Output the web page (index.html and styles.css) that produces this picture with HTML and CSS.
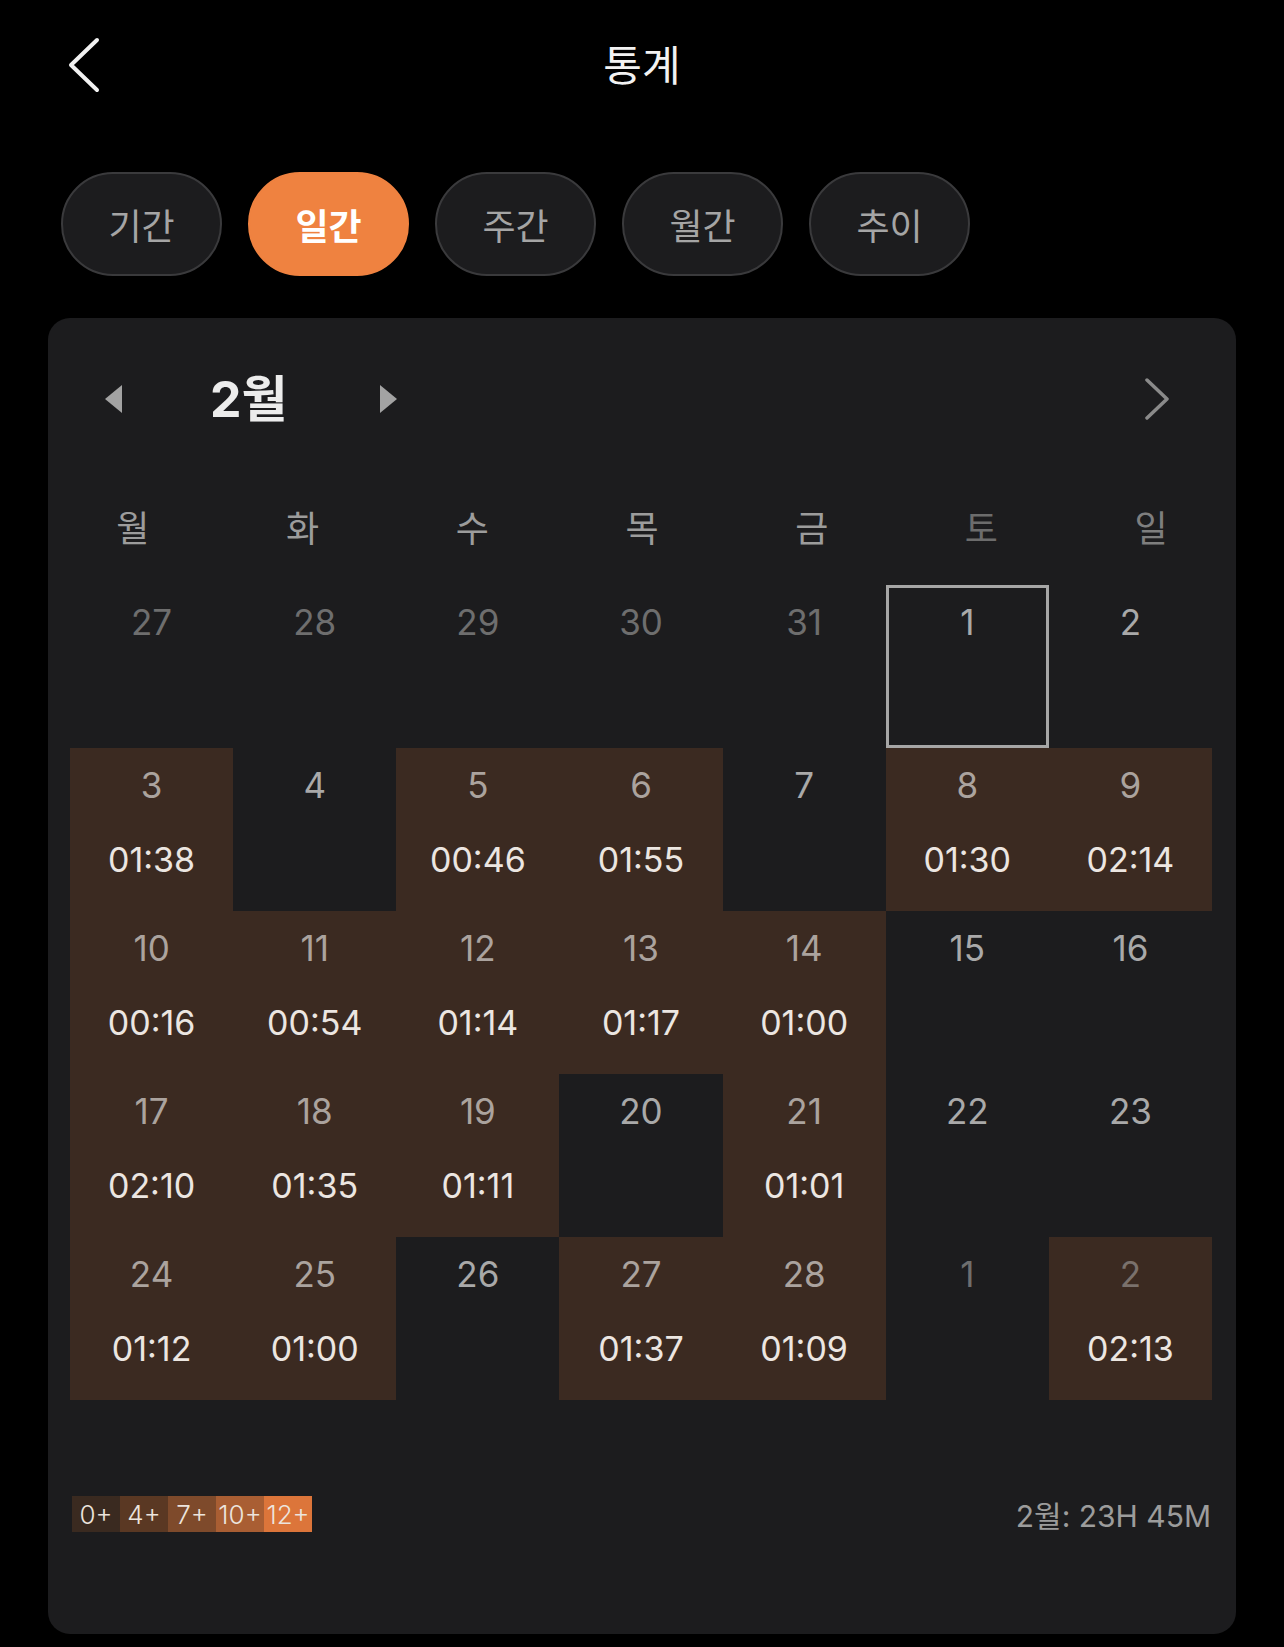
FILE: index.html
```html
<!DOCTYPE html>
<html lang="ko">
<head>
<meta charset="utf-8">
<title>통계</title>
<link rel="stylesheet" href="styles.css">
</head>
<body>
<header class="topbar">
  <div class="back">
    <svg width="34" height="56" viewBox="0 0 34 56"><path d="M29 3 L3 28 L29 53" fill="none" stroke="#f2f2f2" stroke-width="4" stroke-linecap="round" stroke-linejoin="round"/></svg>
  </div>
  <h1 class="title">통계</h1>
  <div></div>
</header>

<nav class="tabs">
  <div class="tab">기간</div>
  <div class="tab active">일간</div>
  <div class="tab">주간</div>
  <div class="tab">월간</div>
  <div class="tab">추이</div>
</nav>

<section class="card">
  <div class="monthbar">
    <div class="monthsel">
      <svg class="tri" width="17" height="28" viewBox="0 0 17 28"><path d="M17 0 L0 14 L17 28 Z" fill="#a3a3a3"/></svg>
      <span class="month">2월</span>
      <svg class="tri" width="17" height="28" viewBox="0 0 17 28"><path d="M0 0 L17 14 L0 28 Z" fill="#a3a3a3"/></svg>
    </div>
    <svg class="next" width="26" height="42" viewBox="0 0 26 42"><path d="M3 2 L23 21 L3 40" fill="none" stroke="#8a8a8a" stroke-width="3.5" stroke-linecap="round" stroke-linejoin="round"/></svg>
  </div>

  <div class="weekdays">
    <span>월</span><span>화</span><span>수</span><span>목</span><span>금</span><span class="sat">토</span><span class="sun">일</span>
  </div>

  <div class="grid">
    <div class="cell other"><span class="d">27</span></div>
    <div class="cell other"><span class="d">28</span></div>
    <div class="cell other"><span class="d">29</span></div>
    <div class="cell other"><span class="d">30</span></div>
    <div class="cell other"><span class="d">31</span></div>
    <div class="cell selected"><span class="d">1</span></div>
    <div class="cell"><span class="d">2</span></div>

    <div class="cell on"><span class="d">3</span><span class="t">01:38</span></div>
    <div class="cell"><span class="d">4</span></div>
    <div class="cell on"><span class="d">5</span><span class="t">00:46</span></div>
    <div class="cell on"><span class="d">6</span><span class="t">01:55</span></div>
    <div class="cell"><span class="d">7</span></div>
    <div class="cell on"><span class="d">8</span><span class="t">01:30</span></div>
    <div class="cell on"><span class="d">9</span><span class="t">02:14</span></div>

    <div class="cell on"><span class="d">10</span><span class="t">00:16</span></div>
    <div class="cell on"><span class="d">11</span><span class="t">00:54</span></div>
    <div class="cell on"><span class="d">12</span><span class="t">01:14</span></div>
    <div class="cell on"><span class="d">13</span><span class="t">01:17</span></div>
    <div class="cell on"><span class="d">14</span><span class="t">01:00</span></div>
    <div class="cell"><span class="d">15</span></div>
    <div class="cell"><span class="d">16</span></div>

    <div class="cell on"><span class="d">17</span><span class="t">02:10</span></div>
    <div class="cell on"><span class="d">18</span><span class="t">01:35</span></div>
    <div class="cell on"><span class="d">19</span><span class="t">01:11</span></div>
    <div class="cell"><span class="d">20</span></div>
    <div class="cell on"><span class="d">21</span><span class="t">01:01</span></div>
    <div class="cell"><span class="d">22</span></div>
    <div class="cell"><span class="d">23</span></div>

    <div class="cell on"><span class="d">24</span><span class="t">01:12</span></div>
    <div class="cell on"><span class="d">25</span><span class="t">01:00</span></div>
    <div class="cell"><span class="d">26</span></div>
    <div class="cell on"><span class="d">27</span><span class="t">01:37</span></div>
    <div class="cell on"><span class="d">28</span><span class="t">01:09</span></div>
    <div class="cell other"><span class="d">1</span></div>
    <div class="cell on other"><span class="d">2</span><span class="t">02:13</span></div>
  </div>

  <div class="footer">
    <div class="legend">
      <span class="lv l0">0+</span><span class="lv l1">4+</span><span class="lv l2">7+</span><span class="lv l3">10+</span><span class="lv l4">12+</span>
    </div>
    <div class="total">2월: 23H 45M</div>
  </div>
</section>
</body>
</html>
```

FILE: styles.css
```css
* { box-sizing: border-box; }

html, body {
  margin: 0;
  padding: 0;
  background: #000;
}

body {
  width: 1284px;
  min-height: 1647px;
  font-family: Inter, "Noto Sans CJK KR", sans-serif;
  color: #f2f2f2;
}

.topbar {
  height: 130px;
  display: grid;
  grid-template-columns: 1fr auto 1fr;
  align-items: center;
  padding-bottom: 4px;
}

.back {
  padding-left: 68px;
  padding-top: 4px;
  display: flex;
}

.title {
  margin: 0;
  font-family: "Noto Sans CJK KR", sans-serif;
  font-size: 42px;
  font-weight: 400;
  color: #f2f2f2;
  line-height: 1;
}

.tabs {
  margin-top: 42px;
  padding-left: 61px;
  display: flex;
  gap: 26px;
}

.tab {
  width: 161px;
  height: 104px;
  border-radius: 52px;
  border: 2px solid #3a3a3c;
  background: #1c1c1e;
  display: flex;
  align-items: center;
  justify-content: center;
  font-family: "Noto Sans CJK KR", sans-serif;
  font-size: 36px;
  color: #a5a5a5;
}

.tab.active {
  background: #ef8240;
  border-color: #ef8240;
  color: #fff;
  font-weight: 700;
}

.card {
  margin-top: 42px;
  margin-left: 48px;
  width: 1188px;
  height: 1316px;
  background: #1c1c1e;
  border-radius: 22px;
  padding-top: 51px;
}

.monthbar {
  height: 60px;
  display: flex;
  align-items: center;
  justify-content: space-between;
  padding-left: 57px;
  padding-right: 66px;
}

.monthsel {
  display: flex;
  align-items: center;
}

.month {
  font-family: Inter, "Noto Sans CJK KR", sans-serif;
  font-size: 50px;
  font-weight: 700;
  color: #ececec;
  margin-left: 88px;
  margin-right: 92px;
  line-height: 1;
}

.weekdays {
  margin-top: 71px;
  height: 50px;
  display: grid;
  grid-template-columns: repeat(7, 1fr);
  align-items: center;
  text-align: center;
  font-family: "Noto Sans CJK KR", sans-serif;
  font-size: 36px;
  color: #9c9c9c;
}

.weekdays .sat { color: #6c6c6c; }
.weekdays .sun { color: #7e7e7e; }

.grid {
  margin-top: 35px;
  margin-left: 22px;
  width: 1142px;
  display: grid;
  grid-template-columns: repeat(7, 1fr);
  grid-auto-rows: 163px;
}

.cell {
  display: flex;
  flex-direction: column;
  align-items: center;
  padding-top: 20px;
}

.cell.on { background: #3b2a21; }

.cell.selected {
  box-shadow: inset 0 0 0 3px #a6a6a6;
}

.d {
  font-size: 35px;
  line-height: 35px;
  color: #a9a9a9;
}

.cell.on .d { color: #aba39e; }

.cell.other .d { color: #6e6e6e; }
.cell.on.other .d { color: #7a716c; }

.t {
  margin-top: 40px;
  font-size: 34px;
  line-height: 34px;
  color: #ece6e1;
}

.footer {
  margin-top: 92px;
  padding-left: 24px;
  padding-right: 25px;
  display: flex;
  justify-content: space-between;
  align-items: center;
}

.legend {
  display: flex;
}

.lv {
  width: 48px;
  height: 36px;
  display: flex;
  align-items: center;
  justify-content: center;
  font-size: 26px;
  font-weight: 300;
  color: #ece4dd;
  white-space: nowrap;
  overflow: hidden;
}

.l0 { background: #3a2a20; }
.l1 { background: #5a3823; }
.l2 { background: #7e4a2b; }
.l3 { background: #a95e33; }
.l4 { background: #dc753a; }

.total {
  font-size: 30px;
  color: #9c9c9c;
  font-family: Inter, "Noto Sans CJK KR", sans-serif;
}
```
